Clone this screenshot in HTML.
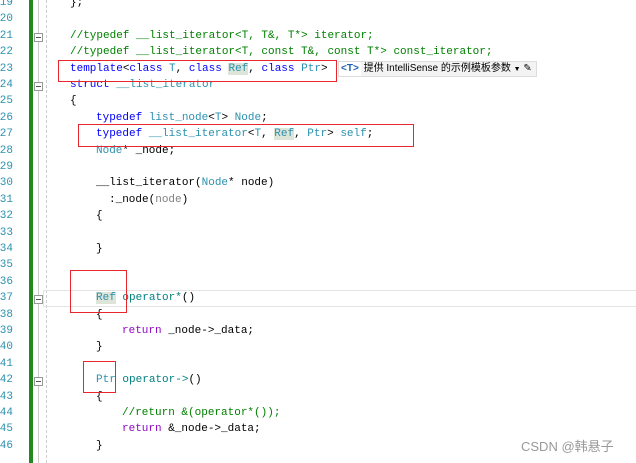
<!DOCTYPE html>
<html><head><meta charset="utf-8"><style>
body{margin:0;width:636px;height:463px;overflow:hidden;background:#fff;position:relative;font-family:"Liberation Mono","NSimSun",monospace;font-size:11px;}
.l{position:absolute;left:0;height:16.4px;line-height:16.4px;white-space:pre;width:636px}
.n{position:absolute;right:623px;color:#2b91af;text-align:right}
.c{position:absolute;color:#000}
.k{color:#0000ff}.t{color:#2b91af}.g{color:#008000}.p{color:#8f08c4}
.hl{background:#dde4d8}
.box{position:absolute;border:1px solid #e8262b}
.fold{position:absolute;left:34px;width:7px;height:7px;border:1px solid #999;background:#fff}
.fold:after{content:"";position:absolute;left:1px;top:3px;width:5px;height:1px;background:#555}
</style></head><body>
<div style="position:absolute;left:29px;top:0;width:4px;height:463px;background:#1f8a1f"></div>
<div style="position:absolute;left:38px;top:0;width:1px;height:463px;background:#ccc"></div>
<div style="position:absolute;left:46px;top:0;width:0;height:463px;border-left:1px dashed #ccc"></div>
<div style="position:absolute;left:43px;top:290px;width:600px;height:17px;border:1px solid #e4e4e4;box-sizing:border-box"></div>
<div class="fold" style="top:33px"></div>
<div class="fold" style="top:82px"></div>
<div class="fold" style="top:295px"></div>
<div class="fold" style="top:377px"></div>

<div class="l" style="top:-5px"><span class="n">19</span><span class="c" style="left:70px">};</span></div>
<div class="l" style="top:11.4px"><span class="n">20</span></div>
<div class="l" style="top:27.8px"><span class="n">21</span><span class="c g" style="left:70px">//typedef __list_iterator&lt;T, T&amp;, T*&gt; iterator;</span></div>
<div class="l" style="top:44.2px"><span class="n">22</span><span class="c g" style="left:70px">//typedef __list_iterator&lt;T, const T&amp;, const T*&gt; const_iterator;</span></div>
<div class="l" style="top:60.6px"><span class="n">23</span><span class="c" style="left:70px"><span class="k">template</span>&lt;<span class="k">class</span> <span class="t">T</span>, <span class="k">class</span> <span class="t hl">Ref</span>, <span class="k">class</span> <span class="t">Ptr</span>&gt;</span></div>
<div class="l" style="top:77px"><span class="n">24</span><span class="c" style="left:70px"><span class="k">struct</span> <span class="t">__list_iterator</span></span></div>
<div class="l" style="top:93.4px"><span class="n">25</span><span class="c" style="left:70px">{</span></div>
<div class="l" style="top:109.8px"><span class="n">26</span><span class="c" style="left:96px"><span class="k">typedef</span> <span class="t">list_node</span>&lt;<span class="t">T</span>&gt; <span class="t">Node</span>;</span></div>
<div class="l" style="top:126.2px"><span class="n">27</span><span class="c" style="left:96px"><span class="k">typedef</span> <span class="t">__list_iterator</span>&lt;<span class="t">T</span>, <span class="t hl">Ref</span>, <span class="t">Ptr</span>&gt; <span class="t">self</span>;</span></div>
<div class="l" style="top:142.6px"><span class="n">28</span><span class="c" style="left:96px"><span class="t">Node</span>* _node;</span></div>
<div class="l" style="top:159px"><span class="n">29</span></div>
<div class="l" style="top:175.4px"><span class="n">30</span><span class="c" style="left:96px">__list_iterator(<span class="t">Node</span>* node)</span></div>
<div class="l" style="top:191.8px"><span class="n">31</span><span class="c" style="left:109px">:_node(<span style="color:#808080">node</span>)</span></div>
<div class="l" style="top:208.2px"><span class="n">32</span><span class="c" style="left:96px">{</span></div>
<div class="l" style="top:224.6px"><span class="n">33</span></div>
<div class="l" style="top:241px"><span class="n">34</span><span class="c" style="left:96px">}</span></div>
<div class="l" style="top:257.4px"><span class="n">35</span></div>
<div class="l" style="top:273.8px"><span class="n">36</span></div>
<div class="l" style="top:290.2px"><span class="n">37</span><span class="c" style="left:96px"><span class="t hl">Ref</span> <span style="color:#008080">operator*</span>()</span></div>
<div class="l" style="top:306.6px"><span class="n">38</span><span class="c" style="left:96px">{</span></div>
<div class="l" style="top:323px"><span class="n">39</span><span class="c" style="left:122px"><span class="p">return</span> _node-&gt;_data;</span></div>
<div class="l" style="top:339.4px"><span class="n">40</span><span class="c" style="left:96px">}</span></div>
<div class="l" style="top:355.8px"><span class="n">41</span></div>
<div class="l" style="top:372.2px"><span class="n">42</span><span class="c" style="left:96px"><span class="t">Ptr</span> <span style="color:#008080">operator-&gt;</span>()</span></div>
<div class="l" style="top:388.6px"><span class="n">43</span><span class="c" style="left:96px">{</span></div>
<div class="l" style="top:405px"><span class="n">44</span><span class="c g" style="left:122px">//return &amp;(operator*());</span></div>
<div class="l" style="top:421.4px"><span class="n">45</span><span class="c" style="left:122px"><span class="p">return</span> &amp;_node-&gt;_data;</span></div>
<div class="l" style="top:437.8px"><span class="n">46</span><span class="c" style="left:96px">}</span></div>

<div style="position:absolute;left:338px;top:61px;width:199px;height:16px;background:#f3f3f3;border:1px solid #ddd;box-sizing:border-box;font-family:'Liberation Sans','Noto Sans CJK SC',sans-serif;font-size:10px;line-height:14px;white-space:nowrap">
<span style="display:inline-block;background:#fff;color:#1a5fb4;font-weight:bold;padding:0 2px">&lt;T&gt;</span> 提供 IntelliSense 的示例模板参数 <span style="font-size:7px">▼</span> ✎</div>

<div class="box" style="left:58px;top:60px;width:277px;height:20px"></div>
<div class="box" style="left:78px;top:124px;width:334px;height:21px"></div>
<div class="box" style="left:70px;top:270px;width:55px;height:41px"></div>
<div class="box" style="left:83px;top:361px;width:31px;height:30px"></div>

<div style="position:absolute;left:521px;top:436px;font-family:'Liberation Sans','Noto Sans CJK SC',sans-serif;font-size:13px;color:#999">CSDN @韩悬子</div>
</body></html>
